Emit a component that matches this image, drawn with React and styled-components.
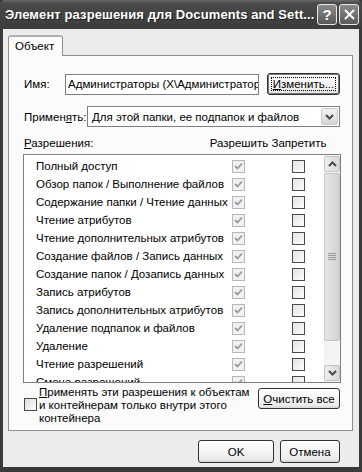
import React from "react";
import styled, { createGlobalStyle } from "styled-components";

const Global = createGlobalStyle`
  html, body { margin: 0; padding: 0; background: #1e1e1e; }
  body { font-family: "Liberation Sans", Arial, sans-serif; }
  * { box-sizing: border-box; }
`;

const Win = styled.div`
  width: 362px;
  height: 472px;
  display: flex;
  flex-direction: column;
  background: #3a3a3a;
  padding: 0 3px 5px 3px;
  font-family: "Liberation Sans", Arial, sans-serif;
  font-size: 11.5px;
  color: #000;
  overflow: hidden;
`;

const TitleBar = styled.div`
  height: 29px;
  margin: 0 -3px;
  padding: 0 3px 0 5px;
  display: flex;
  align-items: center;
  background: linear-gradient(#6a6a6a 0, #4a4a4a 3px, #434343 50%, #3c3c3c 100%);
  border-radius: 5px 5px 0 0;
`;

const Title = styled.div`
  flex: 1;
  color: #fff;
  font-weight: bold;
  font-size: 13px;
  letter-spacing: 0.1px;
  white-space: nowrap;
  overflow: hidden;
  text-shadow: 1px 1px 0 #222;
`;

const CapBtn = styled.div`
  width: 20px;
  height: 21px;
  margin-left: 2px;
  border: 1px solid #e8e8e8;
  border-radius: 3px;
  background: linear-gradient(#8a8a8a, #5a5a5a);
  display: flex;
  align-items: center;
  justify-content: center;
  color: #fff;
  font-weight: bold;
  font-size: 15px;
`;

const Body = styled.div`
  flex: 1;
  background: #ececec;
  padding: 6px 6px 0 5px;
  display: flex;
  flex-direction: column;
`;

const TabStrip = styled.div`
  display: flex;
  height: 21px;
  position: relative;
  z-index: 1;
`;

const Tab = styled.div`
  width: 55px;
  height: 21px;
  border: 1px solid #8f8f8f;
  border-bottom: none;
  border-top: 2px solid #b0b0b0;
  border-radius: 3px 3px 0 0;
  background: #fbfbfb;
  padding: 3px 0 0 6px;
`;

const Pane = styled.div`
  height: 376px;
  margin-top: -1px;
  border: 1px solid #8f8f8f;
  background: #fbfbfb;
  padding: 17px 12px 0 15px;
  display: flex;
  flex-direction: column;
`;

const Row = styled.div`
  display: flex;
  align-items: center;
  height: ${(p) => p.$h || 22}px;
  margin-top: ${(p) => p.$mt || 0}px;
`;

const Label = styled.div`
  width: ${(p) => p.$w}px;
  flex: none;
  white-space: nowrap;
`;

const U = styled.span`
  text-decoration: underline;
  text-underline-offset: 1px;
`;

const Field = styled.div`
  width: ${(p) => p.$w}px;
  height: 21px;
  border: 1px solid #7f7f7f;
  background: #fff;
  display: flex;
  align-items: center;
  padding-left: 2px;
  white-space: nowrap;
  overflow: hidden;
`;

const Btn = styled.div`
  width: ${(p) => p.$w}px;
  height: ${(p) => p.$h || 22}px;
  border: 1px solid #303030;
  border-radius: 3px;
  background: linear-gradient(#ffffff, #ececec 85%, #d6d6d6);
  display: flex;
  align-items: center;
  justify-content: center;
  margin-left: ${(p) => p.$ml || 0}px;
  margin-top: ${(p) => p.$mt || 0}px;
  flex: none;
  position: relative;
  box-shadow: ${(p) => (p.$def ? "inset 0 0 0 1px #7a7a7a" : "none")};
  &::after {
    content: "";
    display: ${(p) => (p.$focus ? "block" : "none")};
    position: absolute;
    inset: 3px;
    border: 1px dotted #000;
  }
`;

const Select = styled.div`
  width: 254px;
  height: 21px;
  border: 1px solid #7f7f7f;
  background: #fff;
  display: flex;
  align-items: center;
  padding-left: 4px;
  white-space: nowrap;
`;

const SelText = styled.div`
  flex: 1;
`;

const DropBtn = styled.div`
  width: 17px;
  height: 17px;
  margin-right: 1px;
  border: 1px solid #c8c8c8;
  border-radius: 2px;
  background: linear-gradient(#f2f2f2, #d6d6d6);
  display: flex;
  align-items: center;
  justify-content: center;
`;

const Header = styled.div`
  display: flex;
  align-items: center;
  height: 14px;
  margin-top: 9px;
`;

const HeadCol = styled.div`
  width: ${(p) => p.$w}px;
  text-align: center;
  flex: none;
  white-space: nowrap;
`;

const List = styled.div`
  margin: 4px 0 0 -1px;
  width: 318px;
  height: 229px;
  border: 1px solid #7f7f7f;
  background: #fff;
  display: flex;
  overflow: hidden;
`;

const Items = styled.div`
  flex: 1;
  padding: 2px 0 0 12px;
  overflow: hidden;
`;

const Item = styled.div`
  display: grid;
  grid-template-columns: 196px 13px 47px 13px;
  align-items: center;
  height: 18px;
  white-space: nowrap;
`;

const Box = styled.div`
  width: 13px;
  height: 13px;
  border: 1px solid ${(p) => (p.$dis ? "#b8b8b8" : "#4a4a4a")};
  background: ${(p) =>
    p.$dis ? "#f2f2f2" : "linear-gradient(135deg, #e4e4e4, #fcfcfc)"};
  display: flex;
  align-items: center;
  justify-content: center;
`;

const Scroll = styled.div`
  width: 16px;
  display: flex;
  flex-direction: column;
  background: #f4f4f4;
  padding: 1px 0;
`;

const SBtn = styled.div`
  height: 16px;
  flex: none;
  border: 1px solid #c4c4c4;
  border-radius: 2px;
  background: linear-gradient(90deg, #eeeeee, #d8d8d8);
  display: flex;
  align-items: center;
  justify-content: center;
`;

const Thumb = styled.div`
  height: 168px;
  margin-top: 1px;
  flex: none;
  border: 1px solid #c4c4c4;
  border-radius: 2px;
  background: linear-gradient(90deg, #e6e6e6, #d2d2d2);
  display: flex;
  align-items: center;
  justify-content: center;
`;

const Track = styled.div`
  flex: 1;
`;

const Bottom = styled.div`
  display: flex;
  margin-top: 3px;
`;

const BigCheck = styled.div`
  flex: none;
  width: 13px;
  height: 13px;
  margin-top: 12px;
  border: 1px solid #4a4a4a;
  background: linear-gradient(135deg, #e0e0e0, #fcfcfc);
`;

const BottomText = styled.div`
  width: 214px;
  margin-left: 2px;
  line-height: 13px;
`;

const Footer = styled.div`
  display: flex;
  justify-content: flex-end;
  padding: 9px 13px 0 0;
`;

const Check = ({ color = "#9a9a9a" }) => (
  <svg width="9" height="9" viewBox="0 0 9 9">
    <path d="M1 4 L3.5 6.5 L8 1.5" fill="none" stroke={color} strokeWidth="1.8" />
  </svg>
);

const Chevron = ({ up }) => (
  <svg width="9" height="6" viewBox="0 0 9 6">
    <path
      d={up ? "M1 5 L4.5 1.5 L8 5" : "M1 1 L4.5 4.5 L8 1"}
      fill="none"
      stroke="#4a4a4a"
      strokeWidth="2"
    />
  </svg>
);

const Grip = () => (
  <svg width="8" height="8" viewBox="0 0 8 8">
    <path d="M0 0.5 H8 M0 2.5 H8 M0 4.5 H8 M0 6.5 H8" stroke="#9c9c9c" strokeWidth="1" />
  </svg>
);

const perms = [
  "Полный доступ",
  "Обзор папок / Выполнение файлов",
  "Содержание папки / Чтение данных",
  "Чтение атрибутов",
  "Чтение дополнительных атрибутов",
  "Создание файлов / Запись данных",
  "Создание папок / Дозапись данных",
  "Запись атрибутов",
  "Запись дополнительных атрибутов",
  "Удаление подпапок и файлов",
  "Удаление",
  "Чтение разрешений",
  "Смена разрешений",
];

export default function App() {
  return (
    <>
      <Global />
      <Win>
        <TitleBar>
          <Title>Элемент разрешения для Documents and Sett...</Title>
          <CapBtn>?</CapBtn>
          <CapBtn>
            <svg width="11" height="11" viewBox="0 0 11 11">
              <path d="M1 1 L10 10 M10 1 L1 10" stroke="#fff" strokeWidth="2" />
            </svg>
          </CapBtn>
        </TitleBar>
        <Body>
          <TabStrip>
            <Tab>Объект</Tab>
          </TabStrip>
          <Pane>
            <Row>
              <Label $w={41}>Имя:</Label>
              <Field $w={194}>Администраторы (X\Администратор</Field>
              <Btn $w={73} $ml={8} $def $focus>
                <span>
                  <U>И</U>зменить...
                </span>
              </Btn>
            </Row>
            <Row $mt={11} $h={21}>
              <Label $w={63}>
                Примен<U>я</U>ть:
              </Label>
              <Select>
                <SelText>Для этой папки, ее подпапок и файлов</SelText>
                <DropBtn>
                  <Chevron />
                </DropBtn>
              </Select>
            </Row>
            <Header>
              <Label $w={184}>
                <U>Р</U>азрешения:
              </Label>
              <HeadCol $w={62}>Разрешить</HeadCol>
              <HeadCol $w={58}>Запретить</HeadCol>
            </Header>
            <List>
              <Items>
                {perms.map((p) => (
                  <Item key={p}>
                    <span>{p}</span>
                    <Box $dis>
                      <Check />
                    </Box>
                    <span />
                    <Box />
                  </Item>
                ))}
              </Items>
              <Scroll>
                <SBtn>
                  <Chevron up />
                </SBtn>
                <Thumb>
                  <Grip />
                </Thumb>
                <Track />
                <SBtn>
                  <Chevron />
                </SBtn>
              </Scroll>
            </List>
            <Bottom>
              <BigCheck />
              <BottomText>
                <U>П</U>рименять эти разрешения к объектам и контейнерам только внутри этого
                контейнера
              </BottomText>
              <Btn $w={82} $h={21} $ml={5} $mt={2}>
                <span>
                  <U>О</U>чистить все
                </span>
              </Btn>
            </Bottom>
          </Pane>
          <Footer>
            <Btn $w={76} $h={23}>OK</Btn>
            <Btn $w={60} $h={23} $ml={6}>
              Отмена
            </Btn>
          </Footer>
        </Body>
      </Win>
    </>
  );
}
